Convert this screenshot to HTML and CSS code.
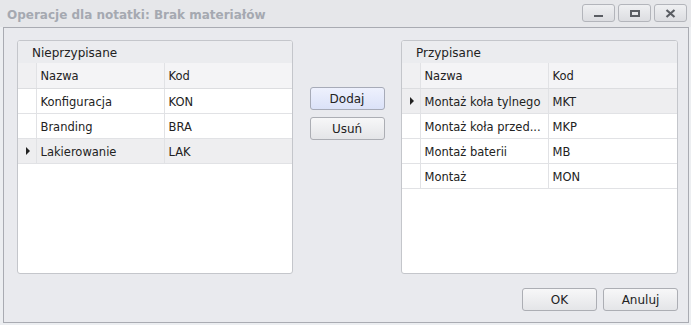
FILE: index.html
```html
<!DOCTYPE html>
<html lang="pl">
<head>
    <meta charset="UTF-8">
    <title>Operacje dla notatki: Brak materiałów</title>
    <link rel="stylesheet" href="styles.css">
</head>
<body>
    <div class="window">
        <div class="titlebar">
            <div class="title">Operacje dla notatki: Brak materiałów</div>
            <div class="win-buttons">
                <div class="win-btn"><span class="glyph-min"></span></div>
                <div class="win-btn"><span class="glyph-max"></span></div>
                <div class="win-btn">
                    <svg width="11" height="9" viewBox="0 0 11 9">
                        <path d="M1.5 1 L9.5 8 M9.5 1 L1.5 8" stroke="#5a5d63" stroke-width="2.2" fill="none"/>
                    </svg>
                </div>
            </div>
        </div>

        <div class="client">
            <div class="lists">
                <div class="panel">
                    <div class="panel-header">Nieprzypisane</div>
                    <table class="grid">
                        <tr class="head">
                            <td class="ind"></td><td class="name">Nazwa</td><td class="code">Kod</td>
                        </tr>
                        <tr><td class="ind"></td><td>Konfiguracja</td><td>KON</td></tr>
                        <tr><td class="ind"></td><td>Branding</td><td>BRA</td></tr>
                        <tr class="current"><td class="ind"><span class="arrow"></span></td><td>Lakierowanie</td><td>LAK</td></tr>
                    </table>
                </div>

                <div class="move-buttons">
                    <button class="btn default">Dodaj</button>
                    <button class="btn">Usuń</button>
                </div>

                <div class="panel">
                    <div class="panel-header">Przypisane</div>
                    <table class="grid">
                        <tr class="head">
                            <td class="ind"></td><td class="name">Nazwa</td><td class="code">Kod</td>
                        </tr>
                        <tr class="current"><td class="ind"><span class="arrow"></span></td><td>Montaż koła tylnego</td><td>MKT</td></tr>
                        <tr><td class="ind"></td><td>Montaż koła przed...</td><td>MKP</td></tr>
                        <tr><td class="ind"></td><td>Montaż baterii</td><td>MB</td></tr>
                        <tr><td class="ind"></td><td>Montaż</td><td>MON</td></tr>
                    </table>
                </div>
            </div>

            <div class="footer">
                <button class="btn">OK</button>
                <button class="btn">Anuluj</button>
            </div>
        </div>
    </div>
</body>
</html>
```

FILE: styles.css
```css
html, body {
    margin: 0;
    padding: 0;
}
body {
    width: 691px;
    height: 325px;
    background-color: #eceef1;
    font-family: "DejaVu Sans", Tahoma, sans-serif;
    font-size: 11px;
    color: #222;
    overflow: hidden;
}
.window {
    height: 325px;
    display: flex;
    flex-direction: column;
}
.titlebar {
    height: 27px;
    display: flex;
    align-items: center;
    justify-content: space-between;
    background-color: #e6e7ea;
}
.title {
    padding-left: 7px;
    font-size: 12px;
    font-weight: bold;
    color: #a5a9b1;
    margin-top: 2px;
}
.win-buttons {
    display: flex;
    gap: 3px;
    padding-right: 4px;
    margin-top: -1px;
}
.win-btn {
    width: 31px;
    height: 16px;
    border: 1px solid #b3b5bb;
    border-radius: 3px;
    background: linear-gradient(#eff0f2, #dcdde1);
    display: flex;
    align-items: center;
    justify-content: center;
}
.glyph-min {
    width: 9px;
    height: 2px;
    background-color: #5a5d63;
    margin-top: 6px;
}
.glyph-max {
    width: 6px;
    height: 3px;
    border: 2px solid #5a5d63;
}
.client {
    flex: 1;
    margin: 0 2px 2px 3px;
    border: 1px solid #a9abb2;
    background-color: #e9eaee;
    padding: 12px 10px 10px 13px;
    display: flex;
    flex-direction: column;
}
.lists {
    display: flex;
    height: 234px;
}
.panel {
    width: 274px;
    border: 1px solid #c4c6cb;
    border-radius: 3px;
    background-color: #fff;
    overflow: hidden;
}
.panel + .move-buttons + .panel {
    width: 275px;
}
.panel-header {
    height: 22px;
    line-height: 24px;
    padding-left: 14px;
    background-color: #ebecef;
    font-size: 12px;
}
.grid {
    width: 100%;
    border-collapse: collapse;
    table-layout: fixed;
    font-size: 11.5px;
}
.grid td {
    height: 25px;
    box-sizing: border-box;
    padding: 2px 0 0 4px;
    border-bottom: 1px solid #e1e2e5;
    border-left: 1px solid #e1e2e5;
    white-space: nowrap;
    overflow: hidden;
}
.grid td.ind {
    width: 18px;
    padding: 0;
    border-left: none;
    text-align: center;
}
.grid td.name {
    width: 128px;
}
.grid tr.head td {
    background-color: #f4f4f6;
    border-bottom-color: #dcdde0;
}
.grid tr.head td.ind {
    background-color: #f0f0f2;
}
.grid tr.current td {
    background-color: #eeeef0;
}
.arrow {
    display: inline-block;
    width: 0;
    height: 0;
    border-top: 4px solid transparent;
    border-bottom: 4px solid transparent;
    border-left: 4px solid #222;
    margin-left: 2px;
    vertical-align: middle;
}
.move-buttons {
    flex: 1;
    display: flex;
    flex-direction: column;
    align-items: center;
    gap: 7px;
    padding-top: 47px;
}
.btn {
    width: 75px;
    height: 23px;
    border: 1px solid #acaeb4;
    border-radius: 3px;
    background: linear-gradient(#f7f7f8, #e4e5e8);
    font-family: "DejaVu Sans", Tahoma, sans-serif;
    font-size: 12px;
    color: #222;
    padding: 0;
}
.btn.default {
    background: linear-gradient(#eef1fd, #dbe2f8);
    border-color: #a7abb8;
}
.footer {
    display: flex;
    justify-content: flex-end;
    gap: 6px;
    margin-top: 14px;
}
```
